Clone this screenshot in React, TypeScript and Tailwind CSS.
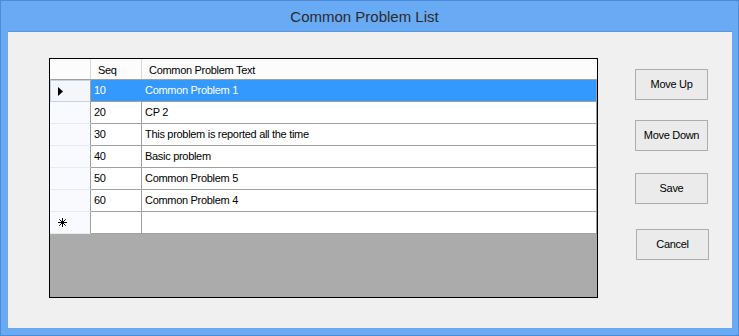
const rows = [
  { seq: "10", text: "Common Problem 1" },
  { seq: "20", text: "CP 2" },
  { seq: "30", text: "This problem is reported all the time" },
  { seq: "40", text: "Basic problem" },
  { seq: "50", text: "Common Problem 5" },
  { seq: "60", text: "Common Problem 4" },
];

const font = { fontFamily: '"Liberation Sans", Arial, sans-serif' };

function Arrow() {
  return (
    <svg width="6" height="9" viewBox="0 0 6 9">
      <path d="M0 0 L5 4.5 L0 9 Z" fill="#000" />
    </svg>
  );
}

function Star() {
  return (
    <svg width="9" height="9" viewBox="0 0 9 9" stroke="#000" strokeWidth="1">
      <path d="M4.5 0 V9 M0 4.5 H9 M1.3 1.3 L7.7 7.7 M7.7 1.3 L1.3 7.7" />
    </svg>
  );
}

function Button({ label, className }: { label: string; className?: string }) {
  return (
    <button
      className={`w-[73px] h-[31px] border border-[#adadad] bg-[#ebebeb] text-[11px] tracking-[-0.3px] text-black ${className ?? ""}`}
    >
      {label}
    </button>
  );
}

export default function App() {
  return (
    <div
      className="w-[739px] h-[336px] bg-[#69aaf5] border border-[#4f8ad6] flex flex-col"
      style={font}
    >
      <div className="h-[30px] flex items-center justify-center pr-[10px] pt-[2px] text-[15px] text-[#2b2b2b]">
        Common Problem List
      </div>

      <div className="ml-[7px] mr-[6px] mb-[7px] flex-1 bg-[#f0f0f0] border-t border-[#5b97dc] flex">
        {/* grid */}
        <div className="ml-[41px] mt-[26px] w-[549px] h-[240px] border border-black bg-[#ababab] flex flex-col text-[11px] tracking-[-0.3px]">
          <div className="flex h-[21px] bg-[#fcfcfc] border-b border-[#a0a0a0]">
            <div className="w-[41px] border-r border-[#d8d8d8]" />
            <div className="w-[51px] border-r border-[#d8d8d8] pl-[7px] flex items-center pt-[2px]">
              Seq
            </div>
            <div className="w-[455px] pl-[7px] flex items-center pt-[2px]">
              Common Problem Text
            </div>
          </div>

          {rows.map((r, i) => {
            const sel = i === 0;
            return (
              <div key={r.seq} className="flex h-[22px]">
                <div
                  className={`w-[41px] border-r border-r-[#a0a0a0] flex items-center pl-[7px] ${
                    sel
                      ? "bg-[#f4f6f9] border-l border-t border-b border-[#c5d3e3] border-r-[#a0a0a0] pl-[6px]"
                      : "bg-[#f8fafd] border-b border-[#e4ebf4]"
                  }`}
                >
                  {sel && <Arrow />}
                </div>
                <div
                  className={`w-[51px] border-b border-[#a0a0a0] pl-[3px] flex items-center ${
                    sel ? "bg-[#3399ff] text-white" : "bg-white border-r text-black"
                  }`}
                >
                  {r.seq}
                </div>
                <div
                  className={`w-[455px] border-b border-r border-[#a0a0a0] pl-[3px] flex items-center ${
                    sel ? "bg-[#3399ff] text-white" : "bg-white text-black"
                  }`}
                >
                  {r.text}
                </div>
              </div>
            );
          })}

          <div className="flex h-[22px]">
            <div className="w-[41px] bg-[#f8fafd] border-r border-r-[#a0a0a0] border-b border-b-[#e4ebf4] flex items-center pl-[8px]">
              <Star />
            </div>
            <div className="w-[51px] bg-white border-r border-b border-[#a0a0a0]" />
            <div className="w-[455px] bg-white border-r border-b border-[#a0a0a0]" />
          </div>
        </div>

        {/* buttons */}
        <div className="ml-[37px] flex flex-col">
          <Button label="Move Up" className="mt-[37px]" />
          <Button label="Move Down" className="mt-[20px]" />
          <Button label="Save" className="mt-[22px]" />
          <Button label="Cancel" className="mt-[25px] ml-[1px]" />
        </div>
      </div>
    </div>
  );
}
